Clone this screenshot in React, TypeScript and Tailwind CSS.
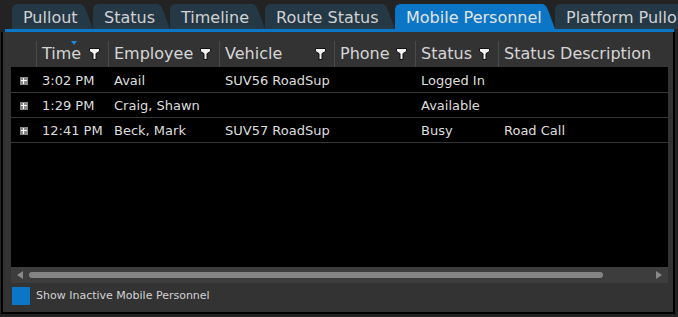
const tabs = [
  { label: 'Pullout', w: 'w-[81px]' },
  { label: 'Status', w: 'w-[77px]' },
  { label: 'Timeline', w: 'w-[95px]' },
  { label: 'Route Status', w: 'w-[130px]' },
  { label: 'Mobile Personnel', w: 'w-[160px]', active: true },
  { label: 'Platform Pullout', w: 'w-[150px]' },
]

const columns = [
  { key: 'time', label: 'Time', w: 'w-[72px]', filter: true, sorted: true },
  { key: 'employee', label: 'Employee', w: 'w-[111px]', filter: true },
  { key: 'vehicle', label: 'Vehicle', w: 'w-[115px]', filter: true },
  { key: 'phone', label: 'Phone', w: 'w-[81px]', filter: true },
  { key: 'status', label: 'Status', w: 'w-[83px]', filter: true },
  { key: 'desc', label: 'Status Description', w: 'w-[169px]' },
]

const rows = [
  { time: '3:02 PM', employee: 'Avail', vehicle: 'SUV56 RoadSup', phone: '', status: 'Logged In', desc: '' },
  { time: '1:29 PM', employee: 'Craig, Shawn', vehicle: '', phone: '', status: 'Available', desc: '' },
  { time: '12:41 PM', employee: 'Beck, Mark', vehicle: 'SUV57 RoadSup', phone: '', status: 'Busy', desc: 'Road Call' },
]

function FilterIcon() {
  return (
    <svg width="11" height="12" viewBox="0 0 11 12" className="shrink-0">
      <path d="M0.5 0.5H10.5V3.4L7 5.6V11.5H4V5.6L0.5 3.4Z" fill="#f2f2f2" stroke="#111" strokeWidth="1" />
    </svg>
  )
}

function ExpandIcon() {
  return (
    <div className="w-[8px] h-[8px] bg-[#8a8a8a] relative">
      <div className="absolute left-[1px] top-[3px] w-[6px] h-[1px] bg-white" />
      <div className="absolute left-[3px] top-[1px] w-[1px] h-[6px] bg-white" />
    </div>
  )
}

export default function App() {
  return (
    <div className="w-[678px] h-[317px] bg-[#232323] overflow-hidden font-['DejaVu_Sans',sans-serif] text-[#d6d6d6]">
      {/* tab strip */}
      <div className="flex h-[29px] pt-[4px] pl-[12px]">
        {tabs.map(t => (
          <div
            key={t.label}
            className={`${t.w} shrink-0 h-[25px] pl-[11px] pt-[3px] flex items-center text-[16px] whitespace-nowrap overflow-hidden [clip-path:polygon(0_5px,1px_2px,2px_1px,5px_0,calc(100%_-_12px)_0,calc(100%_-_9px)_2px,calc(100%_-_7px)_6px,100%_100%,0_100%)] ${t.active ? 'bg-[#0a76c5] text-[#e4e4e4]' : 'bg-[#243846] text-[#d2d2d2]'}`}
          >
            {t.label}
          </div>
        ))}
      </div>
      <div className="ml-[5px] w-[669px] h-[3px] bg-[#0a76c5]" />

      {/* panel */}
      <div className="ml-[1px] w-[674px] h-[282px] bg-[#333] border-l-2 border-r-2 border-b-2 border-black pl-[8px] pr-[5px] flex flex-col">
        {/* header */}
        <div className="flex h-[35px] pt-[9px] text-[16px]">
          <div className="w-[25px] shrink-0" />
          {columns.map(c => (
            <div key={c.key} className={`${c.w} shrink-0 h-[26px] border-l border-[#4a4a4a] relative flex items-center pl-[5px] pr-[8px]`}>
              {c.sorted && (
                <div className="absolute left-[34px] top-[0px] w-0 h-0 border-l-[3px] border-r-[3px] border-t-[4px] border-l-transparent border-r-transparent border-t-[#1a8ae0]" />
              )}
              <span className="flex-1 whitespace-nowrap">{c.label}</span>
              {c.filter && <FilterIcon />}
            </div>
          ))}
        </div>

        {/* body */}
        <div className="flex-1 bg-black pt-[1px] text-[13px] text-[#dedede]">
          {rows.map((r, i) => (
            <div key={i} className="flex h-[25px] pt-[2px] border-b border-[#363636] items-center">
              <div className="w-[25px] shrink-0 flex justify-center">
                <ExpandIcon />
              </div>
              {columns.map(c => (
                <div key={c.key} className={`${c.w} shrink-0 pl-[6px] whitespace-nowrap overflow-hidden`}>
                  {r[c.key as keyof typeof r]}
                </div>
              ))}
            </div>
          ))}
        </div>

        {/* horizontal scrollbar */}
        <div className="h-[16px] bg-[#3d3d3d] flex items-center px-[6px]">
          <div className="w-0 h-0 border-t-[4px] border-b-[4px] border-r-[6px] border-t-transparent border-b-transparent border-r-[#8a8a8a]" />
          <div className="ml-[6px] w-[574px] h-[6px] rounded-full bg-[#858585]" />
          <div className="flex-1" />
          <div className="w-0 h-0 border-t-[4px] border-b-[4px] border-l-[6px] border-t-transparent border-b-transparent border-l-[#8a8a8a]" />
        </div>

        {/* footer */}
        <div className="flex items-center h-[29px] gap-[6px] pl-[1px] pb-[4px]">
          <div className="w-[18px] h-[18px] bg-[#0a76c5]" />
          <span className="text-[11px] text-[#d2d2d2] pt-[2px]">Show Inactive Mobile Personnel</span>
        </div>
      </div>
    </div>
  )
}
